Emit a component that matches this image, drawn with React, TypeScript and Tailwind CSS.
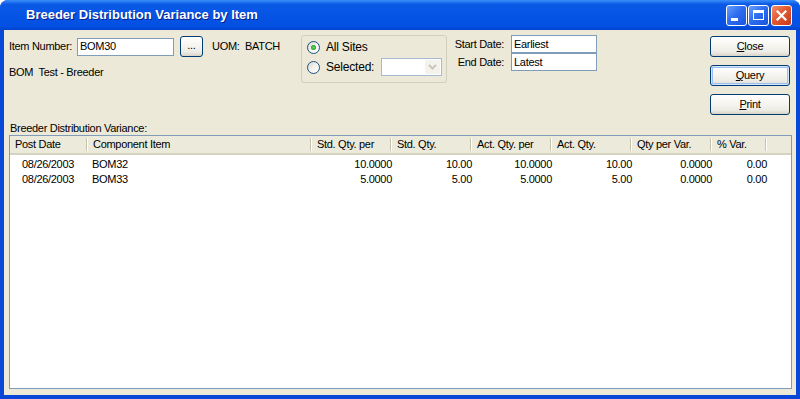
import clsx from "clsx";

const FONT = "font-['Liberation_Sans',Arial,sans-serif] text-[11px] tracking-[-0.3px] text-black";

const COLS = "grid grid-cols-[78px_224px_80px_80px_80px_80px_80px_55px_1fr]";

const HEADERS = [
  "Post Date",
  "Component Item",
  "Std. Qty. per",
  "Std. Qty.",
  "Act. Qty. per",
  "Act. Qty.",
  "Qty per Var.",
  "% Var.",
  "",
];

const ROWS = [
  ["08/26/2003", "BOM32", "10.0000", "10.00", "10.0000", "10.00", "0.0000", "0.00"],
  ["08/26/2003", "BOM33", "5.0000", "5.00", "5.0000", "5.00", "0.0000", "0.00"],
];

function XpButton({ children, focused }: { children: React.ReactNode; focused?: boolean }) {
  return (
    <button
      className={clsx(
        "flex h-[21px] w-[80px] items-center justify-center rounded-[3px] border border-[#003c74] bg-[linear-gradient(to_bottom,#ffffff_0%,#f6f5f0_45%,#ecebe4_80%,#d8d3c6_100%)]",
        focused && "shadow-[inset_0_0_0_1px_#cee7ff,inset_0_0_0_2px_#9fbdf0]"
      )}
    >
      {children}
    </button>
  );
}

function Radio({ checked }: { checked?: boolean }) {
  return (
    <span className="flex h-[13px] w-[13px] shrink-0 items-center justify-center rounded-full border border-[#1c5180] bg-[linear-gradient(135deg,#d8d5cd_0%,#f4f3ee_50%,#ffffff_100%)]">
      {checked && <span className="h-[5px] w-[5px] rounded-full bg-[radial-gradient(circle,#6fd66f_0%,#21a121_70%)]" />}
    </span>
  );
}

function TitleButtons() {
  return (
    <div className="flex gap-[1px]">
      <div className="flex h-[21px] w-[21px] items-end rounded-[3px] border border-white bg-[linear-gradient(135deg,#6aa0ff_0%,#2f6ef0_45%,#1a55dc_100%)] pb-[4px] pl-[4px]">
        <div className="h-[3px] w-[7px] bg-white" />
      </div>
      <div className="flex h-[21px] w-[21px] items-center justify-center rounded-[3px] border border-white bg-[linear-gradient(135deg,#6aa0ff_0%,#2f6ef0_45%,#1a55dc_100%)]">
        <div className="h-[10px] w-[11px] border border-t-[3px] border-white" />
      </div>
      <div className="ml-[1px] flex h-[21px] w-[21px] items-center justify-center rounded-[3px] border border-white bg-[linear-gradient(135deg,#f0906c_0%,#e25a31_45%,#c7391a_100%)]">
        <svg width="11" height="11" viewBox="0 0 11 11">
          <path d="M1.5 1.5 L9.5 9.5 M9.5 1.5 L1.5 9.5" stroke="white" strokeWidth="2.2" strokeLinecap="square" />
        </svg>
      </div>
    </div>
  );
}

function HeaderCell({ label, last }: { label: string; last?: boolean }) {
  return (
    <div className="flex h-full items-center">
      <span className="flex-1 truncate pl-[5px]">{label}</span>
      {!last && <span className="h-[13px] w-[2px] border-l border-r border-l-[#c7c5b2] border-r-white" />}
    </div>
  );
}

export default function App() {
  return (
    <div className={clsx("flex h-[399px] w-[800px] flex-col overflow-hidden rounded-t-[8px] bg-[#0842d8]", FONT)}>
      {/* Title bar */}
      <div className="flex h-[30px] shrink-0 items-center bg-[linear-gradient(to_bottom,#3d8ff8_0%,#0a5ae6_14%,#0553e4_55%,#0350e2_88%,#0142cc_100%)] pl-[26px] pr-[8px]">
        <span className="font-['Liberation_Sans',Arial,sans-serif] text-[13px] font-bold tracking-normal text-white [text-shadow:1px_1px_0_#0a1e8a]">
          Breeder Distribution Variance by Item
        </span>
        <div className="ml-auto">
          <TitleButtons />
        </div>
      </div>

      {/* Body */}
      <div className="flex flex-1 flex-col border-x-4 border-b-4 border-[#0847d8] bg-[#ece9d8]">
        {/* Top controls */}
        <div className="flex items-start pl-[5px] pr-[6px] pt-[5px]">
          {/* Item */}
          <div className="mt-[1px] flex w-[292px] flex-col">
            <div className="flex h-[21px] items-center">
              <span className="w-[68px]">Item Number:</span>
              <div className="flex h-[18px] w-[97px] items-center border border-[#7f9db9] bg-white pl-[2px]">BOM30</div>
              <button className="ml-[6px] flex h-[21px] w-[23px] items-center justify-center rounded-[3px] border border-[#003c74] bg-[linear-gradient(to_bottom,#ffffff_0%,#f6f5f0_45%,#ecebe4_80%,#d8d3c6_100%)] pb-[2px]">
                ...
              </button>
              <span className="ml-[9px] whitespace-pre">UOM:  BATCH</span>
            </div>
            <span className="mt-[8px] whitespace-pre leading-[14px]">BOM  Test - Breeder</span>
          </div>

          {/* Sites group */}
          <div className="flex h-[48px] w-[146px] flex-col gap-[4px] rounded-[3px] border border-[#d0d0bf] pl-[5px] pt-[4px]">
            <div className="flex h-[14px] items-center gap-[6px]">
              <Radio checked />
              <span className="text-[12px] tracking-[-0.2px]">All Sites</span>
            </div>
            <div className="flex h-[18px] items-center gap-[6px]">
              <Radio />
              <span className="w-[49px] text-[12px] tracking-[-0.2px]">Selected:</span>
              <div className="flex h-[18px] w-[61px] shrink-0 items-stretch justify-end border border-[#a5b9d0] bg-white p-[1px]">
                <div className="flex w-[15px] items-center justify-center rounded-[2px] bg-[#f3f2ec]">
                  <svg width="9" height="6" viewBox="0 0 9 6">
                    <path d="M1 1 L4.5 4.5 L8 1" stroke="#c9c7ba" strokeWidth="2" fill="none" />
                  </svg>
                </div>
              </div>
            </div>
          </div>

          {/* Dates */}
          <div className="ml-[1px] flex flex-col">
            <div className="flex h-[18px] items-center">
              <span className="w-[56px] text-right">Start Date:</span>
              <div className="ml-[7px] flex h-[18px] w-[86px] items-center border border-[#7f9db9] bg-white pl-[2px]">Earliest</div>
            </div>
            <div className="flex h-[18px] items-center">
              <span className="w-[56px] text-right">End Date:</span>
              <div className="ml-[7px] flex h-[18px] w-[86px] items-center border border-[#7f9db9] bg-white pl-[2px]">Latest</div>
            </div>
          </div>

          {/* Actions */}
          <div className="ml-auto mt-[1px] flex flex-col gap-[8px]">
            <XpButton>
              <span className="underline">C</span>lose
            </XpButton>
            <XpButton focused>
              <span className="underline">Q</span>uery
            </XpButton>
            <XpButton>
              <span className="underline">P</span>rint
            </XpButton>
          </div>
        </div>

        <span className="ml-[6px] mt-[7px] leading-[13px]">Breeder Distribution Variance:</span>

        {/* List */}
        <div className="mb-[6px] ml-[5px] mr-[4px] flex flex-1 flex-col border border-[#7f9db9] bg-white">
          <div className={clsx(COLS, "h-[19px] border-b-2 border-[#d6d2c2] bg-[#ebeadb]")}>
            {HEADERS.map((h, i) => (
              <HeaderCell key={i} label={h} last={i === HEADERS.length - 1} />
            ))}
          </div>
          <div className="flex flex-col pt-[1px]">
            {ROWS.map((r, ri) => (
              <div key={ri} className={clsx(COLS, "h-[15px] items-center")}>
                <span className="pl-[12px]">{r[0]}</span>
                <span className="pl-[4px]">{r[1]}</span>
                {r.slice(2).map((v, ci) => (
                  <span key={ci} className="text-right">
                    {v}
                  </span>
                ))}
                <span />
              </div>
            ))}
          </div>
        </div>
      </div>
    </div>
  );
}
